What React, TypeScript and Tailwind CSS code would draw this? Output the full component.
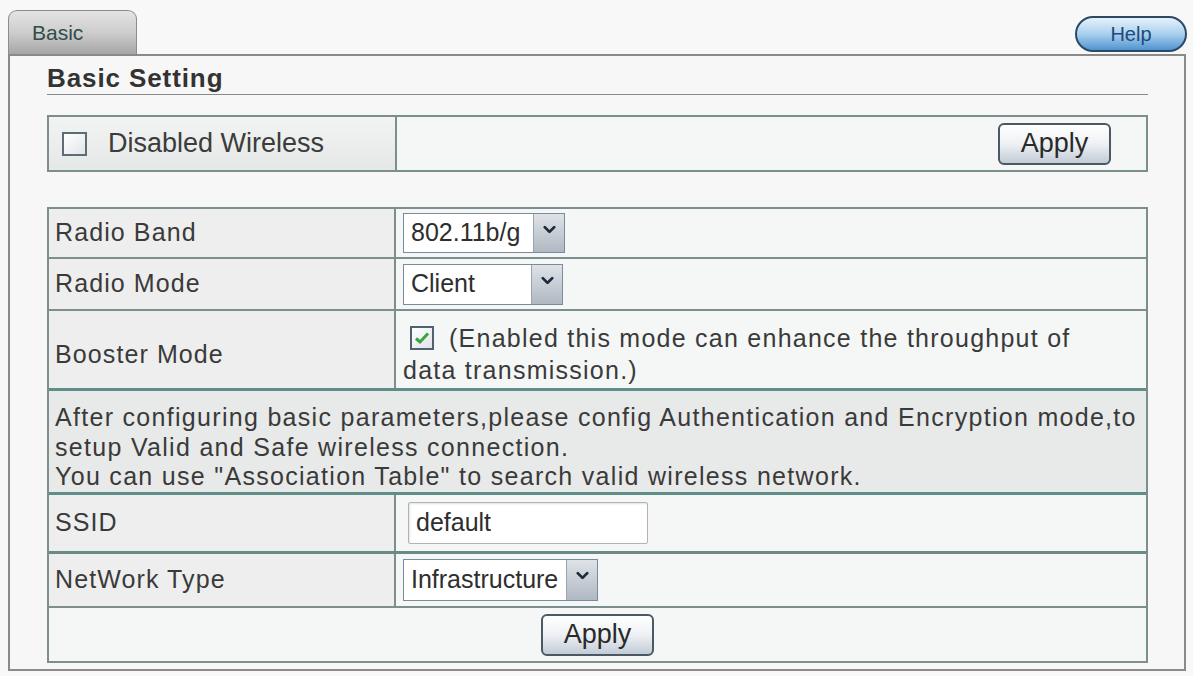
import { ChevronDown } from 'lucide-react';
import type { ReactNode } from 'react';

function Select({ value, width, height }: { value: string; width: string; height: string }) {
  return (
    <div className={`flex ${width} ${height} border border-[#7b8b9b] bg-white`}>
      <div className="flex-1 flex items-center pl-[7px] text-[25px] text-[#2e2e2e] whitespace-nowrap">{value}</div>
      <div className="w-[31px] flex items-start justify-center pt-[6px] border-l border-[#9aa6b2] bg-gradient-to-b from-[#dfe3e8] to-[#b0b8c2]">
        <ChevronDown size={19} strokeWidth={3.5} className="text-[#1c2a3a]" />
      </div>
    </div>
  );
}

function ApplyButton() {
  return (
    <button className="w-[113px] h-[42px] rounded-[6px] border-2 border-[#4b5865] bg-gradient-to-b from-[#ffffff] via-[#eef1f4] to-[#c3cbd5] text-[27px] leading-none text-[#2a2a2a]">
      Apply
    </button>
  );
}

function Row({
  label,
  children,
  h,
  border = 'border-b-2 border-[#7c8f8c]',
  labelPad = '',
}: {
  label: string;
  children: ReactNode;
  h: string;
  border?: string;
  labelPad?: string;
}) {
  return (
    <div className={`flex ${h} ${border}`}>
      <div
        className={`w-[347px] flex items-center pl-[6px] ${labelPad} bg-[#eeeeee] border-r-2 border-[#7c8f8c] text-[25px] tracking-[1.1px] text-[#3a3a3a]`}
      >
        {label}
      </div>
      <div className="flex-1 flex items-center pl-[7px] bg-[#f5f6f6]">{children}</div>
    </div>
  );
}

export default function App() {
  return (
    <div className="w-[1193px] h-[676px] bg-[#f8f8f8] pt-[10px] pl-[8px] font-['Liberation_Sans',Arial,sans-serif] text-[#3a3a3a]">
      {/* Tabs */}
      <div className="flex items-end justify-between w-[1179px] h-[44px]">
        <div className="w-[129px] h-[44px] rounded-t-[9px] border border-b-0 border-[#8c8c8c] bg-gradient-to-b from-[#e4e4e4] via-[#cdcdcd] to-[#a6a6a6] pl-[23px] pt-[6px] text-[21px] text-[#2f4d4a]">
          Basic
        </div>
        <div className="w-[112px] h-[36px] mb-[2px] rounded-full border-2 border-[#2c4a66] bg-gradient-to-b from-[#e6f2fb] via-[#a9d0ee] to-[#4f94cf] flex items-center justify-center text-[20px] text-[#1d4a7c]">
          Help
        </div>
      </div>

      {/* Panel */}
      <div className="w-[1178px] h-[617px] border-2 border-[#8a8a8a] bg-[#f7f7f7] pl-[37px] pr-[36px] pt-[9px]">
        <div className="pb-[3px] border-b border-[#8a8a8a] text-[26px] leading-none font-bold tracking-[0.9px] text-[#333333]">
          Basic Setting
        </div>

        {/* Disabled Wireless */}
        <div className="mt-[20px] flex h-[57px] border-2 border-[#7c8f8c]">
          <div className="w-[348px] flex items-center pl-[13px] bg-gradient-to-b from-[#f2f3f3] to-[#e6e8e8] border-r-2 border-[#7c8f8c]">
            <span className="w-[25px] h-[24px] border-2 border-[#5e6c78] bg-gradient-to-br from-[#ffffff] to-[#e2e5e8]" />
            <span className="ml-[21px] text-[27px] text-[#3c3c3c]">Disabled Wireless</span>
          </div>
          <div className="flex-1 flex items-center justify-end pr-[35px] bg-[#f5f6f6]">
            <ApplyButton />
          </div>
        </div>

        {/* Settings table */}
        <div className="mt-[35px] border-2 border-[#7c8f8c]">
          <Row label="Radio Band" h="h-[50px]">
            <Select value="802.11b/g" width="w-[162px]" height="h-[40px]" />
          </Row>
          <Row label="Radio Mode" h="h-[52px]">
            <Select value="Client" width="w-[160px]" height="h-[41px]" />
          </Row>
          <Row label="Booster Mode" h="h-[80px]" border="border-b-[3px] border-[#5f8d87]" labelPad="pt-[10px]">
            <div className="pt-[9px] text-[25px] leading-[32px] tracking-[1.25px] text-[#3a3a3a] whitespace-nowrap">
              <div className="flex items-center">
                <span className="ml-[7px] w-[24px] h-[24px] border-2 border-[#4f6272] bg-gradient-to-br from-[#ffffff] to-[#dfe4e8] flex items-center justify-center">
                  <svg width="16" height="14" viewBox="0 0 16 14">
                    <path d="M2 7.5 L6 11 L14 2.5" fill="none" stroke="#3aa43c" strokeWidth="3" />
                  </svg>
                </span>
                <span className="ml-[15px]">(Enabled this mode can enhance the throughput of</span>
              </div>
              <div>data transmission.)</div>
            </div>
          </Row>
          <div className="h-[104px] border-b-[3px] border-[#5f8d87] bg-[#e8e9e9] pl-[6px] pt-[12px] text-[25px] leading-[29.5px] tracking-[1.3px] text-[#3a3a3a] whitespace-nowrap">
            <div>After configuring basic parameters,please config Authentication and Encryption mode,to</div>
            <div>setup Valid and Safe wireless connection.</div>
            <div>You can use "Association Table" to search valid wireless network.</div>
          </div>
          <Row label="SSID" h="h-[59px]" border="border-b-[3px] border-[#6a8a86]">
            <div className="ml-[5px] w-[240px] h-[42px] border border-[#b3b3b3] rounded-[2px] bg-white flex items-center pl-[7px] text-[25px] text-[#2e2e2e] shadow-[inset_1px_1px_2px_rgba(0,0,0,0.12)]">
              default
            </div>
          </Row>
          <Row label="NetWork Type" h="h-[54px]">
            <Select value="Infrastructure" width="w-[195px]" height="h-[42px]" />
          </Row>
          <div className="h-[53px] flex items-center justify-center bg-[#f5f6f6]">
            <ApplyButton />
          </div>
        </div>
      </div>
    </div>
  );
}
